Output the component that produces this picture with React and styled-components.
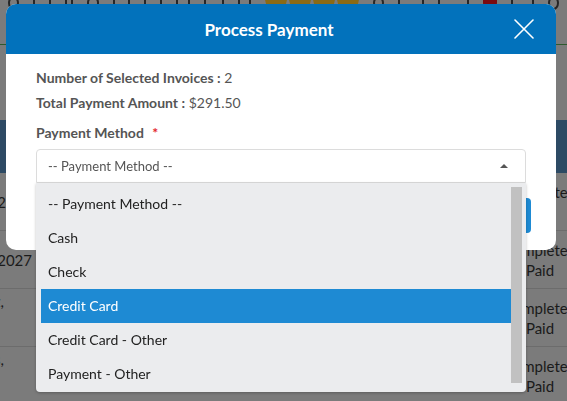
import styled, { createGlobalStyle } from "styled-components";

const GlobalStyle = createGlobalStyle`
  html, body {
    margin: 0;
    padding: 0;
  }
  body {
    font-family: Lato, "Open Sans", sans-serif;
    background: #7b7b7b;
    overflow: hidden;
  }
`;

const methods = [
  "-- Payment Method --",
  "Cash",
  "Check",
  "Credit Card",
  "Credit Card - Other",
  "Payment - Other",
];

const rows = [
  { left: "01/12/2027", status: ["Completed", "Paid"] },
  { left: "02/08/2027", status: ["Completed", "Paid"] },
  { left: "Lopez,", name: true, status: ["Completed", "Paid"] },
  { left: "Reyes,", name: true, status: ["Completed", "Paid"] },
];

const App = () => {
  return (
    <>
      <GlobalStyle />
      {/* invoice list behind the dialog, shaded by the backdrop */}
      <Page>
        <Toolbar>
          <ToolIcon $w={12} $round />
          <ToolIcon $w={20} />
          <ToolIcon $w={8} />
          <ToolIcon $w={14} $round />
          <ToolIcon $w={18} />
          <ToolIcon $w={20} />
          <ToolIcon $w={16} />
          <ToolIcon $w={22} />
          <ToolIcon $w={14} />
          <Coins>
            <Coin />
            <Coin />
            <Coin />
            <Coin />
          </Coins>
          <ToolIcon $w={12} $round />
          <ToolIcon $w={30} />
          <ToolIcon $w={34} />
          <Badge />
          <ToolIcon $w={26} />
          <ToolIcon $w={12} $round />
        </Toolbar>

        <Table>
          <HeadRow />
          {rows.map((row, i) => (
            <Row key={i}>
              <LeftCell $name={row.name}>{row.left}</LeftCell>
              <Filler />
              <StatusCell>
                {row.status.map((t) => (
                  <span key={t}>{t}</span>
                ))}
              </StatusCell>
            </Row>
          ))}
        </Table>
      </Page>

      <Overlay>
        <Modal role="dialog" aria-modal="true">
          <Header>
            <Title>Process Payment</Title>
            <CloseButton aria-label="Close">
              <svg width="20" height="20" viewBox="0 0 20 20">
                <path
                  d="M1 1 L19 19 M19 1 L1 19"
                  stroke="#ffffff"
                  strokeWidth="1.6"
                  strokeLinecap="round"
                />
              </svg>
            </CloseButton>
          </Header>

          <Body>
            <InfoLine>
              <strong>Number of Selected Invoices :</strong> 2
            </InfoLine>
            <InfoLine>
              <strong>Total Payment Amount :</strong> $291.50
            </InfoLine>

            <FieldLabel>
              Payment Method <Required>*</Required>
            </FieldLabel>

            <SelectWrap>
              <SelectBox>
                <span>-- Payment Method --</span>
                <Caret />
              </SelectBox>

              <Dropdown>
                <Options>
                  {methods.map((m) => (
                    <Option key={m} $active={m === "Credit Card"}>
                      {m}
                    </Option>
                  ))}
                </Options>
                <ScrollThumb />
              </Dropdown>
            </SelectWrap>
          </Body>

          <Footer>
            <SubmitButton>Submit</SubmitButton>
          </Footer>
        </Modal>
      </Overlay>
    </>
  );
};

export default App;

const Page = styled.div`
  width: 567px;
  height: 401px;
  overflow: hidden;
  background: #7b7b7b;
  color: #1a1a1a;
`;

const Toolbar = styled.div`
  height: 44px;
  display: flex;
  align-items: flex-start;
  gap: 14px;
  padding: 0 8px;
  border-bottom: 1px solid #2e5a2e;
`;

const ToolIcon = styled.div`
  width: ${(p) => p.$w}px;
  height: 14px;
  margin-top: -4px;
  border: 2px solid #262626;
  border-radius: ${(p) => (p.$round ? "50%" : "2px")};
  box-sizing: border-box;
`;

const Coins = styled.div`
  display: flex;
  gap: 2px;
  margin-top: -12px;
`;

const Coin = styled.div`
  width: 22px;
  height: 22px;
  border-radius: 50%;
  background: #8a6a16;
`;

const Badge = styled.div`
  width: 16px;
  height: 14px;
  margin-top: -6px;
  border-radius: 5px;
  background: #7a0a0f;
`;

const Table = styled.div`
  margin-top: 75px;
`;

const HeadRow = styled.div`
  height: 53px;
  background: #2d4a64;
`;

const Row = styled.div`
  height: 58px;
  display: flex;
  align-items: center;
  border-bottom: 1px solid #6c6c6c;
  box-sizing: border-box;
  font-size: 15px;
  line-height: 20px;
`;

const LeftCell = styled.div`
  width: ${(p) => (p.$name ? 4 : 32)}px;
  display: flex;
  justify-content: flex-end;
  align-self: ${(p) => (p.$name ? "flex-start" : "center")};
  margin-top: ${(p) => (p.$name ? 2 : 0)}px;
  white-space: nowrap;
`;

const Filler = styled.div`
  flex: 1;
`;

const StatusCell = styled.div`
  width: 60px;
  margin-right: -3px;
  display: flex;
  flex-direction: column;
  align-items: center;
  white-space: nowrap;
`;

const Overlay = styled.div`
  position: fixed;
  top: 0;
  left: 0;
  right: 0;
  bottom: 0;
  z-index: 50;
`;

const Modal = styled.section`
  position: absolute;
  top: 4px;
  left: 6px;
  width: 550px;
  background: #ffffff;
  border-radius: 10px;
`;

const Header = styled.div`
  height: 50px;
  display: flex;
  align-items: center;
  padding: 0 20px;
  background: #0272bc;
  border-radius: 10px 10px 0 0;
`;

const Title = styled.h2`
  flex: 1;
  margin: 0;
  text-align: center;
  color: #ffffff;
  font-size: 17px;
  font-weight: 700;
`;

const CloseButton = styled.button`
  width: 24px;
  height: 24px;
  padding: 0;
  border: none;
  background: none;
  display: flex;
  align-items: center;
  justify-content: center;
  cursor: pointer;
`;

const Body = styled.div`
  padding: 14px 30px 0;
`;

const InfoLine = styled.p`
  margin: 0 0 5px;
  font-size: 14px;
  line-height: 20px;
  color: #555;

  strong {
    font-weight: 700;
  }
`;

const FieldLabel = styled.label`
  display: block;
  margin: 10px 0 6px;
  font-size: 14px;
  line-height: 20px;
  font-weight: 700;
  color: #555;
`;

const Required = styled.span`
  margin-left: 5px;
  color: #e3262c;
`;

const SelectWrap = styled.div`
  position: relative;
`;

const SelectBox = styled.div`
  height: 34px;
  display: flex;
  align-items: center;
  justify-content: space-between;
  padding: 0 17px 0 11px;
  border: 1px solid #dcdcdc;
  border-radius: 4px 4px 0 0;
  box-sizing: border-box;
  font-size: 13px;
  color: #555;
`;

const Caret = styled.span`
  width: 0;
  height: 0;
  border-left: 4px solid transparent;
  border-right: 4px solid transparent;
  border-bottom: 4px solid #555;
`;

const Dropdown = styled.div`
  position: absolute;
  top: 100%;
  left: 0;
  right: 0;
  display: flex;
  padding: 4px 4px 1px 5px;
  background: #ebecee;
  border-radius: 0 0 4px 4px;
  box-shadow: 0 1px 3px rgba(0, 0, 0, 0.25);
  z-index: 20;
`;

const Options = styled.ul`
  flex: 1;
  margin: 0;
  padding: 0;
  list-style: none;
`;

const Option = styled.li`
  height: 34px;
  line-height: 34px;
  padding-left: 7px;
  font-size: 14px;
  color: ${(p) => (p.$active ? "#ffffff" : "#222")};
  background: ${(p) => (p.$active ? "#1e8ad3" : "transparent")};
`;

const ScrollThumb = styled.div`
  width: 11px;
  margin-bottom: 8px;
  background: #c1c1c1;
`;

const Footer = styled.div`
  display: flex;
  justify-content: flex-end;
  padding: 15px 25px 17px 30px;
`;

const SubmitButton = styled.button`
  height: 35px;
  padding: 0 18px;
  border: none;
  border-radius: 4px;
  background: #1e8ad3;
  color: #ffffff;
  font-family: inherit;
  font-size: 14px;
`;
